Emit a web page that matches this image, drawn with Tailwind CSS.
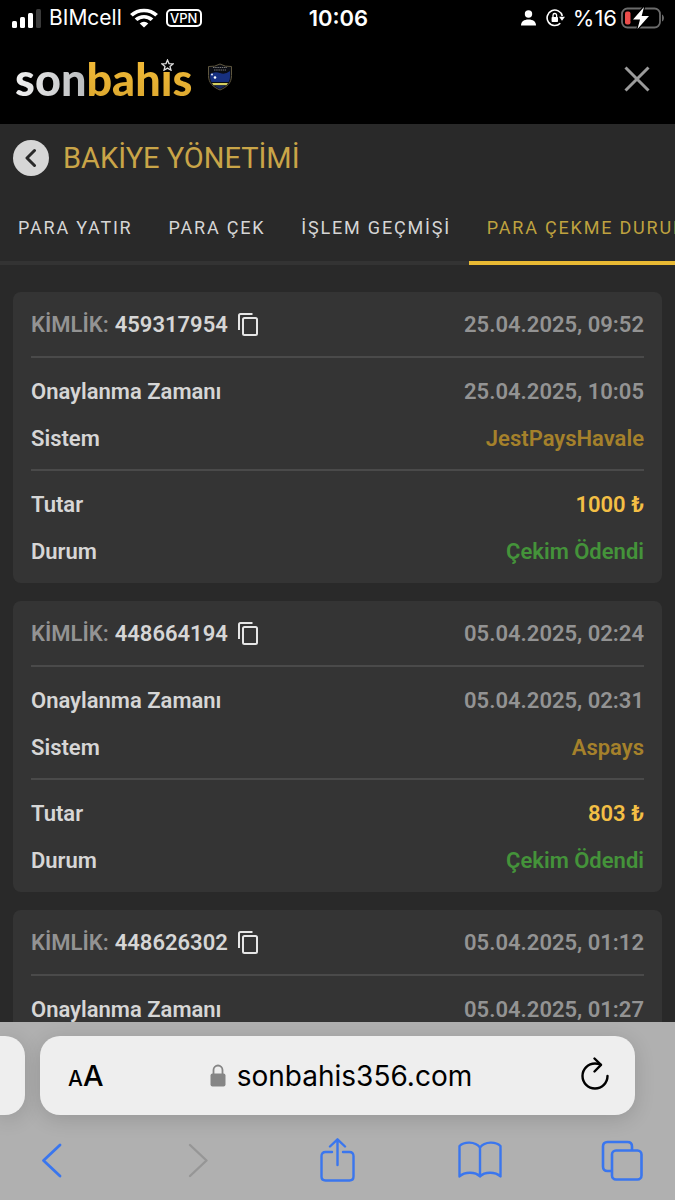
<!DOCTYPE html>
<html lang="tr">
  <head>
    <meta charset="UTF-8" />
    <meta name="viewport" content="width=device-width, initial-scale=1.0" />
    <title>Bakiye Yönetimi</title>
    <script src="https://cdn.jsdelivr.net/npm/@tailwindcss/browser@4"></script>
  </head>
  <body class="bg-black">
    <div class="h-screen flex flex-col overflow-hidden font-['Roboto',sans-serif]">
      <!-- Status bar -->
      <div class="h-9 shrink-0 pl-3 pr-[10px] grid grid-cols-[1fr_auto_1fr] items-center text-white text-[22px] leading-6 font-['Inter',sans-serif]">
        <div class="flex items-center gap-2">
          <svg class="w-[29px] h-[19px]" viewBox="0 0 29 19" fill="#fff">
            <rect x="0" y="12" width="5" height="7" rx="1.5" />
            <rect x="8" y="8" width="5" height="11" rx="1.5" />
            <rect x="16" y="4" width="5" height="15" rx="1.5" />
            <rect x="24" y="0" width="5" height="19" rx="1.5" fill="#3a3a3a" />
          </svg>
          <span class="text-[21px]">BIMcell</span>
          <svg class="w-[28px] h-[20px]" viewBox="0 0 26 20" preserveAspectRatio="none" fill="none" stroke="#fff" stroke-width="3.6">
            <path d="M1.3 7.3a16.8 16.8 0 0 1 23.4 0" />
            <path d="M5.6 11.8a10.6 10.6 0 0 1 14.8 0" />
            <path d="M13 19.6l-4-4.2a5.8 5.8 0 0 1 8 0z" fill="#fff" stroke="none" />
          </svg>
          <span class="w-9 h-[18px] border-2 border-white rounded-[5px] text-[13px] leading-[14px] font-medium text-center">VPN</span>
        </div>
        <span class="font-semibold">10:06</span>
        <div class="flex items-center justify-end">
          <svg class="w-[15px] h-[16px]" viewBox="0 0 15 16" fill="#fff">
            <circle cx="7.5" cy="4" r="3.7" />
            <path d="M0 15.5c0-4 3-6 7.5-6s7.500 2 7.500 6z" />
          </svg>
          <svg class="ml-[10px] w-[20px] h-[18px]" viewBox="0 0 20 18" fill="none" stroke="#fff" stroke-width="1.6">
            <path d="M14.3 14.2A7.700 7.700 0 1 1 16.300 7" />
            <path d="M13 7.800h6l-3 4z" fill="#fff" stroke="none" />
            <rect x="5.600" y="8" width="6.400" height="5" rx="0.800" fill="#fff" stroke="none" />
            <path d="M7 8.500V6.300a1.800 1.800 0 0 1 3.600 0v2.200" stroke-width="1.300" />
          </svg>
          <span class="ml-[7px]">%16</span>
          <svg class="ml-1 w-[44px] h-[22px]" viewBox="0 0 44 22">
            <rect x="1" y="1.500" width="38" height="19" rx="5.500" fill="none" stroke="#6b6b6b" stroke-width="1.800" />
            <path d="M41 7.500c2.600 1 2.600 6 0 7z" fill="#6b6b6b" />
            <rect x="4" y="4.500" width="5.500" height="13" rx="2" fill="#eb4d4b" />
            <path d="M23 0L12 12.500h7L16.500 22 28 9h-7.300z" fill="#fff" stroke="#000" stroke-width="2.400" paint-order="stroke" />
          </svg>
        </div>
      </div>

      <!-- Site header -->
      <header class="h-[88px] shrink-0 pl-[15px] pr-[22px] pb-[2px] flex items-center justify-between">
        <div class="flex items-center gap-[15px]">
          <a href="#" aria-label="sonbahis" class="relative flex text-[45px] leading-[54px] font-black font-['Lato',sans-serif]">
            <span class="bg-linear-to-r from-[#f2f2f2] to-[#b9bbbd] bg-clip-text text-transparent">son</span>
            <span class="bg-linear-to-b from-[#f6bd38] to-[#d9a62e] bg-clip-text text-transparent">bahıs</span>
            <svg class="absolute right-[18px] top-[7px] w-[13px] h-[12px]" viewBox="0 0 13 12" fill="#000" stroke="#ddd" stroke-width="1.300">
              <path d="M6.500 1l1.500 3.600 4 .3-3 2.500 1 3.800-3.500-2.100L3 11.200l1-3.800L1 4.900l4-.3z" />
            </svg>
          </a>
          <svg class="mb-1 w-[26px] h-[28px]" viewBox="0 0 26 28">
            <path d="M1.500 3.500Q8 4 13 1q5 3 11.500 2.500v9C24.500 20 20 24 13 27 6 24 1.500 20 1.500 12.500z" fill="#0b0d14" stroke="#5f573f" />
            <path d="M3 11q5-3 10-1t10-2v5.500c0 2-.5 4-1.500 5.500h-17C3.500 17.500 3 15 3 13z" fill="#173080" />
            <path d="M5 20h16l-1.500 2.200h-13z" fill="#d6d05f" />
            <path d="M7 22.500h12L13 26z" fill="#17285e" />
            <path d="M6 4.500h14M7 7h12" stroke="#777" stroke-dasharray="1.500 .7" />
            <circle cx="5" cy="11.500" r="0.900" fill="#fff" />
            <circle cx="8" cy="14.500" r="1.300" fill="#fff" />
          </svg>
        </div>
        <button type="button" aria-label="Kapat" class="p-[3px]">
          <svg class="w-[26px] h-[26px]" viewBox="0 0 26 26" fill="none" stroke="#9b9b9b" stroke-width="3">
            <path d="M1.500 1.500l23 23M24.500 1.500l-23 23" />
          </svg>
        </button>
      </header>

      <main class="flex-1 min-h-0 flex flex-col bg-[#292929]">
        <!-- Title -->
        <div class="h-[68px] shrink-0 px-[13px] flex items-center gap-[14px]">
          <button type="button" aria-label="Geri" class="size-9 rounded-full bg-[#d6d6d6] flex items-center justify-center">
            <svg class="w-[12px] h-[20px]" viewBox="0 0 12 20" fill="none" stroke="#292929" stroke-width="3" stroke-linecap="round" stroke-linejoin="round">
              <path d="M9.500 2.500L2 10l7.500 7.500" />
            </svg>
          </button>
          <h1 class="text-[29px] leading-9 text-[#c9a548]">BAKİYE YÖNETİMİ</h1>
        </div>

        <!-- Tabs -->
        <nav class="shrink-0 flex overflow-x-auto [scrollbar-width:none] whitespace-nowrap text-lg leading-6 tracking-widest text-[#d6d6d6]">
          <a href="#" class="shrink-0 px-[18px] pt-6 pb-[21px] border-b-4 border-[#333]">PARA YATIR</a>
          <a href="#" class="shrink-0 px-[18px] pt-6 pb-[21px] border-b-4 border-[#333]">PARA ÇEK</a>
          <a href="#" class="shrink-0 px-[18px] pt-6 pb-[21px] border-b-4 border-[#333]">İŞLEM GEÇMİŞİ</a>
          <a href="#" class="shrink-0 px-[18px] pt-6 pb-[21px] border-b-4 border-[#e8b933] text-[#bfa23f]">PARA ÇEKME DURUMU</a>
        </nav>

        <!-- Withdrawals -->
        <div class="flex-1 min-h-0 overflow-y-auto [scrollbar-width:none] px-[13px] pt-[27px] flex flex-col gap-[18px] text-[22px] leading-[47px] font-semibold text-[#d6d6d6]">
          <section class="shrink-0 px-[18px] bg-[#343434] rounded-lg">
            <div class="h-[66px] border-b-2 border-[#4a4a4a] flex items-center justify-between">
              <div class="flex items-center gap-1.5">
                <span class="text-[#939393]">KİMLİK:</span>
                <span>459317954</span>
                <button type="button" aria-label="Kopyala" class="ml-1">
                  <svg class="w-[20px] h-[23px]" viewBox="0 0 20 23" fill="none" stroke="#e6e6e6" stroke-width="2">
                    <path d="M1 17V2.500Q1 1 2.500 1H14.500" />
                    <rect x="5" y="5" width="14" height="17" rx="1.500" />
                  </svg>
                </button>
              </div>
              <span class="text-[#939393]">25.04.2025, 09:52</span>
            </div>
            <div class="pt-[10px] pb-[7px] border-b-2 border-[#4a4a4a]">
              <div class="flex justify-between">
                <span>Onaylanma Zamanı</span>
                <span class="text-[#939393]">25.04.2025, 10:05</span>
              </div>
              <div class="flex justify-between">
                <span>Sistem</span>
                <span class="text-[#a5812b]">JestPaysHavale</span>
              </div>
            </div>
            <div class="pt-[10px] pb-2">
              <div class="flex justify-between">
                <span>Tutar</span>
                <span class="text-[#f3bf45]">1000 ₺</span>
              </div>
              <div class="flex justify-between">
                <span>Durum</span>
                <span class="text-[#44933a]">Çekim Ödendi</span>
              </div>
            </div>
          </section>

          <section class="shrink-0 px-[18px] bg-[#343434] rounded-lg">
            <div class="h-[66px] border-b-2 border-[#4a4a4a] flex items-center justify-between">
              <div class="flex items-center gap-1.5">
                <span class="text-[#939393]">KİMLİK:</span>
                <span>448664194</span>
                <button type="button" aria-label="Kopyala" class="ml-1">
                  <svg class="w-[20px] h-[23px]" viewBox="0 0 20 23" fill="none" stroke="#e6e6e6" stroke-width="2">
                    <path d="M1 17V2.500Q1 1 2.500 1H14.500" />
                    <rect x="5" y="5" width="14" height="17" rx="1.500" />
                  </svg>
                </button>
              </div>
              <span class="text-[#939393]">05.04.2025, 02:24</span>
            </div>
            <div class="pt-[10px] pb-[7px] border-b-2 border-[#4a4a4a]">
              <div class="flex justify-between">
                <span>Onaylanma Zamanı</span>
                <span class="text-[#939393]">05.04.2025, 02:31</span>
              </div>
              <div class="flex justify-between">
                <span>Sistem</span>
                <span class="text-[#a5812b]">Aspays</span>
              </div>
            </div>
            <div class="pt-[10px] pb-2">
              <div class="flex justify-between">
                <span>Tutar</span>
                <span class="text-[#f3bf45]">803 ₺</span>
              </div>
              <div class="flex justify-between">
                <span>Durum</span>
                <span class="text-[#44933a]">Çekim Ödendi</span>
              </div>
            </div>
          </section>

          <section class="shrink-0 px-[18px] bg-[#343434] rounded-t-lg">
            <div class="h-[66px] border-b-2 border-[#4a4a4a] flex items-center justify-between">
              <div class="flex items-center gap-1.5">
                <span class="text-[#939393]">KİMLİK:</span>
                <span>448626302</span>
                <button type="button" aria-label="Kopyala" class="ml-1">
                  <svg class="w-[20px] h-[23px]" viewBox="0 0 20 23" fill="none" stroke="#e6e6e6" stroke-width="2">
                    <path d="M1 17V2.500Q1 1 2.500 1H14.500" />
                    <rect x="5" y="5" width="14" height="17" rx="1.500" />
                  </svg>
                </button>
              </div>
              <span class="text-[#939393]">05.04.2025, 01:12</span>
            </div>
            <div class="pt-[10px] pb-[7px]">
              <div class="flex justify-between">
                <span>Onaylanma Zamanı</span>
                <span class="text-[#939393]">05.04.2025, 01:27</span>
              </div>
            </div>
          </section>
        </div>
      </main>

      <!-- Browser bar -->
      <footer class="h-[178px] shrink-0 pt-[14px] bg-[#b0b0b0] font-['Inter',sans-serif]">
        <div class="flex gap-[15px] pr-10 overflow-x-clip">
          <div class="w-[25px] h-[79px] rounded-r-[20px] bg-[#eee] shadow-[0_4px_20px_rgba(0,0,0,0.15)]"></div>
          <div class="flex-1 h-[79px] pl-7 pr-[26px] rounded-[20px] bg-[#eee] shadow-[0_4px_20px_rgba(0,0,0,0.15)] flex items-center justify-between text-black">
            <button type="button" aria-label="Sayfa ayarları" class="pt-1 flex items-baseline font-medium">
              <span class="text-[21px] leading-8">A</span>
              <span class="text-[29px] leading-8">A</span>
            </button>
            <div class="flex items-center gap-[11px]">
              <svg class="w-[16px] h-[23px]" viewBox="0 0 16 23">
                <path d="M3.500 11V6a4.500 4.500 0 0 1 9 0v5" fill="none" stroke="#858585" stroke-width="1.800" />
                <rect x="0.500" y="9.500" width="15" height="13" rx="2" fill="#858585" />
              </svg>
              <input type="text" aria-label="Adres" value="sonbahis356.com" class="w-[238px] text-[28px] leading-9 outline-none" />
            </div>
            <button type="button" aria-label="Yenile" class="pb-1">
              <svg class="w-[28px] h-[33px]" viewBox="0 0 28 33" fill="none" stroke="#000" stroke-width="2.400" stroke-linecap="round" stroke-linejoin="round">
                <path d="M26.500 19A12.500 12.500 0 1 1 14 6.500q3 0 5.500 1" />
                <path d="M13.500 1.500L20 7.800l-6.500 6.700" />
              </svg>
            </button>
          </div>
        </div>
        <div class="mt-[23px] px-[31px] flex justify-between text-[#3a76ee]">
          <button type="button" aria-label="Geri">
            <svg class="size-11" viewBox="0 0 44 44" fill="none" stroke="currentColor" stroke-width="2.800" stroke-linecap="round" stroke-linejoin="round">
              <path d="M29 7L12.500 22.500 29 38" />
            </svg>
          </button>
          <button type="button" aria-label="İleri" class="text-[#969696]">
            <svg class="size-11" viewBox="0 0 44 44" fill="none" stroke="currentColor" stroke-width="2.400" stroke-linecap="round" stroke-linejoin="round">
              <path d="M17 7l16.500 15.500L17 38" />
            </svg>
          </button>
          <button type="button" aria-label="Paylaş">
            <svg class="size-11" viewBox="0 0 44 44" fill="none" stroke="currentColor" stroke-width="2.400" stroke-linecap="round" stroke-linejoin="round">
              <path d="M16 14H9.500Q5.500 14 5.500 18V38.500Q5.500 42.500 9.500 42.500H33.500Q37.500 42.500 37.500 38.500V18Q37.500 14 33.500 14H27" />
              <path d="M21.500 27V1.500M14 8.500l7.500-7.200L29 8.500" />
            </svg>
          </button>
          <button type="button" aria-label="Yer imleri">
            <svg class="size-11" viewBox="0 0 44 44" fill="none" stroke="currentColor" stroke-width="2.400" stroke-linejoin="round">
              <path d="M22 9.500C17 3 6 3.500 1.500 8v30.500c5-5 16-5 20.500 0 4.500-5 15.500-5 20.500 0V8C38 3.500 27 3 22 9.500zV38.500" />
            </svg>
          </button>
          <button type="button" aria-label="Sekmeler">
            <svg class="size-11" viewBox="0 0 44 44" fill="none" stroke="currentColor" stroke-width="2.600">
              <path d="M11 33H7.500Q3 33 3 28.500V8.500Q3 4 7.500 4H27.500Q32 4 32 8.500V12" />
              <rect x="12" y="12.500" width="29.500" height="29" rx="4" />
            </svg>
          </button>
        </div>
      </footer>
    </div>
  </body>
</html>
